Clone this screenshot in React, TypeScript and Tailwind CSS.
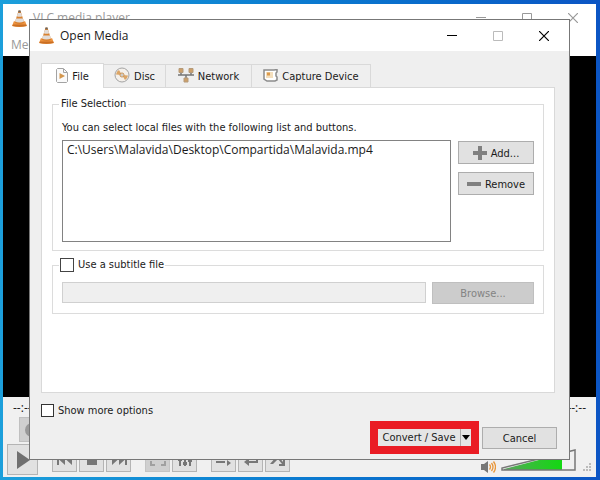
import { ReactNode } from 'react'

const tabs = [
  { id: 'file', label: 'File', icon: <FileIcon />, width: 'w-[63px]' },
  { id: 'disc', label: 'Disc', icon: <DiscIcon />, width: 'w-[62px]' },
  { id: 'network', label: 'Network', icon: <NetworkIcon />, width: 'w-[86px]' },
  { id: 'capture', label: 'Capture Device', icon: <CaptureIcon />, width: 'w-[119px]' }
]

function Cone({ className }: { className: string }) {
  return (
    <svg viewBox="0 0 16 18" className={className} aria-hidden="true">
      <path d="M2 12h12l2 5q-8 2-16 0z" fill="#ee9441" />
      <path d="M1 15.500h14l.6 1.500q-7.600 1.500-15.200 0z" fill="#c96f24" />
      <path d="M7 0.500h2l4 13q-5 2.500-10 0z" fill="#d9812f" />
      <path d="M6.200 3h3.600l1.100 3.500q-2.900 1.200-5.800 0z" fill="#e2dcd8" />
      <path d="M4.300 9h7.400l1.100 3.300q-4.800 1.800-9.600 0z" fill="#e2dcd8" />
      <path d="M7 0.500h2l.5 1.700h-3z" fill="#666" />
    </svg>
  )
}

function FileIcon() {
  return (
    <svg viewBox="0 0 12 15" className="h-[15px] w-3" fill="none" aria-hidden="true">
      <path d="M1.500.500h6l4 4v9l-1 1h-9l-1-1v-12z" fill="#fafafa" stroke="#a3a3a3" />
      <path d="M7.500 1v3.500H11" stroke="#a3a3a3" />
      <path d="M3.500 5l5.500 3-5.500 3z" fill="#d3974f" />
    </svg>
  )
}

function DiscIcon() {
  return (
    <svg viewBox="0 0 16 16" className="size-4" fill="none" aria-hidden="true">
      <circle cx="8" cy="8" r="7" fill="#f4f0eb" stroke="#a3a3a3" />
      <path d="M8 8L2 7.500A6 6 0 0 1 5 3zM8 8l6 .5a6 6 0 0 1-3 4.500z" fill="#dba566" />
      <circle cx="8" cy="8" r="2" fill="#fff" stroke="#c08a4b" />
      <circle cx="8" cy="8" r="0.800" fill="#888" />
    </svg>
  )
}

function NetworkIcon() {
  return (
    <svg viewBox="0 0 16 15" className="h-[15px] w-4" aria-hidden="true">
      <path d="M0 7h16M3 5v2M13 5v2M8 7v3" fill="none" stroke="#777" strokeWidth="1.500" />
      <path d="M1 .500h4v4H1zM11 .500h4v4h-4zM6 10h4v4H6z" fill="#cc9f69" stroke="#b59a7a" />
    </svg>
  )
}

function CaptureIcon() {
  return (
    <svg viewBox="0 0 15 13" className="h-[13px] w-[15px]" aria-hidden="true">
      <path d="M1 1h10l3-.5v2.500l-1 1v3l1 1v3l-2 1H4l-3-2z" fill="#fff" stroke="#8c8c8c" strokeWidth="1.500" />
      <path d="M3 3h7v6H3z" fill="#f4dfbd" />
      <path d="M4 3.500h3v3H4z" fill="#dc9a4b" />
    </svg>
  )
}

function WindowButtons({ className, maxClass }: { className: string; maxClass: string }) {
  return (
    <div className={`flex items-center ${className}`}>
      <button aria-label="Minimize" className="flex w-[46px] justify-center">
        <svg viewBox="0 0 10 10" className="size-[10px]">
          <path d="M0 4.500h10" stroke="currentColor" />
        </svg>
      </button>
      <button aria-label="Maximize" className={`flex w-[46px] justify-center ${maxClass}`}>
        <svg viewBox="0 0 10 10" className="size-[10px]" fill="none">
          <path d="M.5.500h9v9h-9z" stroke="currentColor" />
        </svg>
      </button>
      <button aria-label="Close" className="flex w-[46px] justify-center">
        <svg viewBox="0 0 10 10" className="size-[10px]">
          <path d="M0 0l10 10M10 0L0 10" stroke="currentColor" strokeWidth="1.200" />
        </svg>
      </button>
    </div>
  )
}

function ToolButton({ label, disabled, children }: { label: string; disabled?: boolean; children: ReactNode }) {
  return (
    <button
      aria-label={label}
      disabled={disabled}
      className="flex h-[25px] w-[25px] items-center justify-center border border-[#b4b4b4] bg-[#e1e1e1] text-[#777] disabled:border-[#c4c4c4] disabled:bg-[#cfcfcf] disabled:text-[#a0a0a0]"
    >
      <svg viewBox="0 0 16 16" className="size-4" fill="currentColor">
        {children}
      </svg>
    </button>
  )
}

function PlayerControls() {
  return (
    <div className="flex flex-col bg-[#f0f0f0] px-1 pb-[2px]">
      <div className="flex h-5 items-center justify-between px-[6px] pt-[2px] font-['Open_Sans',sans-serif] text-xs">
        <span>--:--</span>
        <span>--:--</span>
      </div>
      <div className="pl-3">
        <button
          aria-label="Record"
          className="flex h-[25px] w-[25px] items-center justify-center border border-[#c0c0c0] bg-[#cfcfcf]"
        >
          <span className="size-[14px] rounded-full bg-[#999]" />
        </button>
      </div>
      <div className="mt-[2px] flex items-center">
        <button
          aria-label="Play"
          className="flex size-[31px] items-center justify-center border border-[#b4b4b4] bg-[#e1e1e1]"
        >
          <svg viewBox="0 0 16 18" className="h-[18px] w-4">
            <path d="M2 0l13 9-13 9z" fill="#6f6f6f" />
          </svg>
        </button>
        <div className="ml-[14px] flex gap-[2px]">
          <ToolButton label="Previous">
            <path d="M0 2h2v11H0zM8 2v11L2 7.500zM15 2v11L9 7.500z" />
          </ToolButton>
          <ToolButton label="Stop">
            <path d="M3 3h10v10H3z" />
          </ToolButton>
          <ToolButton label="Next">
            <path d="M14 2h2v11h-2zM8 2v11l6-5.500zM1 2v11l6-5.500z" />
          </ToolButton>
        </div>
        <div className="ml-[14px] flex gap-[2px]">
          <ToolButton label="Fullscreen" disabled>
            <path d="M0 2h5v2H2v3H0zM16 2h-5v2h3v3h2zM0 14h5v-2H2V9H0zM16 14h-5v-2h3V9h2z" />
          </ToolButton>
          <ToolButton label="Extended settings">
            <path d="M2 1h2v13H2zM7 1h2v13H7zM12 1h2v13h-2zM1 6h4v3H1zM6 10h4v3H6zM11 7h4v3h-4z" />
          </ToolButton>
        </div>
        <div className="ml-[14px] flex gap-[2px]">
          <ToolButton label="Playlist">
            <path d="M0 3h9v2H0zM0 9h9v2H0zM11 8v6l4-3z" />
          </ToolButton>
          <ToolButton label="Loop">
            <path d="M3 3h12v8H6v3l-5-4 5-4v3h7V5H3z" />
          </ToolButton>
          <ToolButton label="Random">
            <path d="M0 12L6 5h3l4 5V8h2v6H9v-2h3L8 7l-5 5z" />
          </ToolButton>
        </div>
        <div className="ml-auto flex items-center">
          <svg viewBox="0 0 15 12" className="mt-[14px] h-3 w-[15px]" fill="none" aria-hidden="true">
            <path d="M0 3h3l4-3v12L3 9H0z" fill="#777" />
            <path d="M8.500 3.500q2 2.500 0 5M10.500 2q3 4 0 8M12.500.5q4 5.500 0 11" stroke="#e8963a" strokeWidth="1.300" />
          </svg>
          <svg viewBox="0 0 78 24" className="ml-1 h-6 w-[78px]" aria-label="Volume">
            <defs>
              <linearGradient id="volume">
                <stop offset="0" stopColor="#5f9e62" />
                <stop offset="0.400" stopColor="#39bd3b" />
                <stop offset="1" stopColor="#13d812" />
              </linearGradient>
            </defs>
            <path d="M4 21L62 6v16H4z" fill="url(#volume)" />
            <path d="M2 22v-2L75 2v20z" fill="none" stroke="#777" strokeWidth="1.500" />
            <text x="7" y="10" fontSize="10" fill="#555">100%</text>
          </svg>
          <svg viewBox="0 0 10 10" className="mt-4 ml-1 size-[10px]" fill="#bbb" aria-hidden="true">
            <path d="M7 0h2v2H7zM4 3h2v2H4zM7 3h2v2H7zM1 6h2v2H1zM4 6h2v2H4zM7 6h2v2H7z" />
          </svg>
        </div>
      </div>
    </div>
  )
}

function OpenMediaDialog() {
  return (
    <div
      role="dialog"
      aria-label="Open Media"
      className="absolute top-[19px] right-[30px] left-[29px] border border-[#777] bg-[#efefef] pb-[5px]"
    >
      <div className="flex h-[31px] items-center bg-white pr-[2px] pl-[9px]">
        <Cone className="h-[17px] w-[15px]" />
        <h2 className="ml-[6px] font-['Open_Sans',sans-serif] text-xs">Open Media</h2>
        <WindowButtons className="ml-auto text-black" maxClass="text-[#bbb]" />
      </div>

      <div className="mt-3 mr-[14px] ml-[11px]">
        <div role="tablist" className="flex items-end">
          {tabs.map((tab, index) => (
            <button
              key={tab.id}
              role="tab"
              aria-selected={index === 0}
              className={`flex items-center justify-center gap-1 border-t border-r border-[#d9d9d9] pb-[2px] ${tab.width} ${
                index === 0 ? '-mb-px h-[25px] border-l bg-white' : 'h-[23px]'
              }`}
            >
              {tab.icon}
              <span className="pt-1">{tab.label}</span>
            </button>
          ))}
        </div>

        <div role="tabpanel" className="border border-[#d9d9d9] bg-white px-[10px] pt-[9px] pb-[78px]">
          <fieldset className="border border-[#dcdcdc] px-[9px] pb-2">
            <legend className="-ml-[3px] px-[2px] leading-[14px]">File Selection</legend>
            <p className="mt-[9px] leading-4">You can select local files with the following list and buttons.</p>
            <div className="mt-1 flex gap-[7px]">
              <ul className="h-[102px] flex-1 border border-[#828282] px-1 pt-[1px] font-['Open_Sans',sans-serif] text-xs">
                <li>C:\Users\Malavida\Desktop\Compartida\Malavida.mp4</li>
              </ul>
              <div className="flex w-[76px] flex-col gap-2 pt-[1px]">
                <button className="flex h-[23px] items-center justify-center gap-1 border border-[#adadad] bg-[#e1e1e1]">
                  <svg viewBox="0 0 14 14" className="size-[14px]" aria-hidden="true">
                    <path d="M5 0h4v5h5v4H9v5H5V9H0V5h5z" fill="#808080" />
                  </svg>
                  <span className="pt-[2px]">Add...</span>
                </button>
                <button className="flex h-[23px] items-center justify-center gap-1 border border-[#adadad] bg-[#e1e1e1]">
                  <svg viewBox="0 0 14 14" className="size-[14px]" aria-hidden="true">
                    <path d="M0 5h14v4H0z" fill="#808080" />
                  </svg>
                  <span className="pt-[2px]">Remove</span>
                </button>
              </div>
            </div>
          </fieldset>

          <fieldset className="mt-[7px] border border-[#dcdcdc] px-[9px] pb-[9px]">
            <legend className="-ml-[3px] px-[1px]">
              <label className="flex items-center gap-1 leading-[14px]">
                <input type="checkbox" className="size-[14px] appearance-none border border-[#444] bg-white" />
                Use a subtitle file
              </label>
            </legend>
            <div className="mt-[10px] flex gap-[6px]">
              <input
                type="text"
                disabled
                aria-label="Subtitle file"
                className="h-[21px] min-w-0 flex-1 border border-[#d0d0d0] bg-[#efefef]"
              />
              <button disabled className="h-[22px] w-[102px] border border-[#bfbfbf] bg-[#cccccc] pt-[2px] text-[#838383]">
                Browse...
              </button>
            </div>
          </fieldset>
        </div>

        <label className="mt-[10px] flex items-center gap-1 leading-[15px]">
          <input type="checkbox" className="size-[13px] appearance-none border border-[#333] bg-white" />
          Show more options
        </label>
      </div>

      <div className="mt-[3px] flex items-center justify-end gap-[3px] pr-3">
        <div className="flex border-8 border-[#ea1c24] bg-[#e5e5e5]">
          <button className="h-[17px] w-[82px] leading-[17px]">Convert / Save</button>
          <button
            aria-label="More actions"
            className="flex w-[11px] items-center justify-center border-l border-[#adadad]"
          >
            <svg viewBox="0 0 8 5" className="h-[5px] w-2">
              <path d="M0 0h8L4 5z" />
            </svg>
          </button>
        </div>
        <button className="h-[22px] w-[75px] border border-[#adadad] bg-[#e1e1e1] pt-[2px]">Cancel</button>
      </div>
    </div>
  )
}

export default function App() {
  return (
    <div className="relative flex min-h-screen flex-col bg-linear-to-r from-[#1c9fdb] to-[#0c55c4] pt-1 pr-1 pb-[3px] pl-[3px] font-['DejaVu_Sans_Condensed','Noto_Sans',sans-serif] text-[11px] leading-4 text-[#1a1a1a]">
      <main className="flex flex-1 flex-col bg-white">
        <header className="h-[52px] text-[#999]">
          <div className="flex h-7 items-center pl-[9px]">
            <Cone className="h-[17px] w-[15px]" />
            <h1 className="ml-[6px] font-['Open_Sans',sans-serif] text-xs">VLC media player</h1>
            <WindowButtons className="ml-auto" maxClass="" />
          </div>
          <nav className="pt-[5px] pl-2 font-['Open_Sans',sans-serif] text-xs">
            <button>Media</button>
          </nav>
        </header>
        <div className="flex-1 bg-black" />
        <PlayerControls />
      </main>
      <OpenMediaDialog />
    </div>
  )
}
